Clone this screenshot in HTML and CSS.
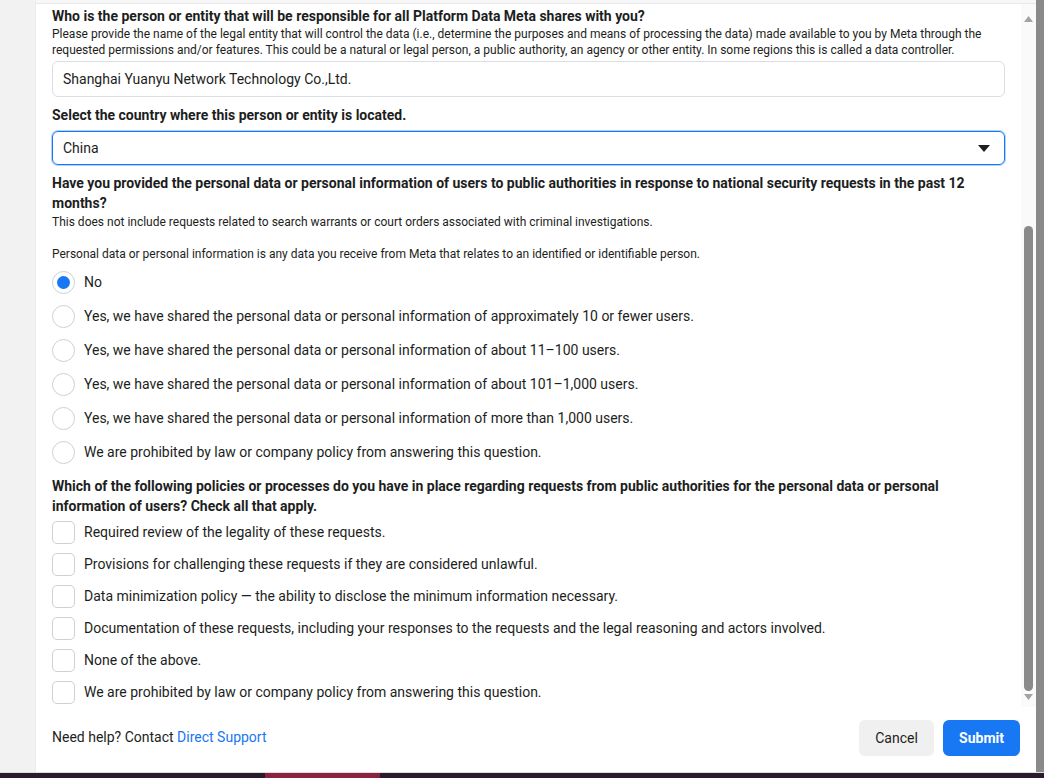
FILE: index.html
```html
<!DOCTYPE html>
<html lang="en">
<head>
<meta charset="utf-8">
<title>Data handling questions</title>
<link rel="stylesheet" href="styles.css">
</head>
<body>
<div class="page">
  <div class="main">
    <div class="gutter"></div>
    <div class="modal">
      <div class="modal-top"></div>
      <div class="modal-body">
        <div class="content">
          <div class="q-title">Who is the person or entity that will be responsible for all Platform Data Meta shares with you?</div>
          <div class="q-desc">Please provide the name of the legal entity that will control the data (i.e., determine the purposes and means of processing the data) made available to you by Meta through the requested permissions and/or features. This could be a natural or legal person, a public authority, an agency or other entity. In some regions this is called a data controller.</div>
          <div class="text-input">Shanghai Yuanyu Network Technology Co.,Ltd.</div>

          <div class="q-title q-select-label">Select the country where this person or entity is located.</div>
          <div class="select">
            <span>China</span>
            <svg class="caret" width="12" height="7" viewBox="0 0 12 7"><path d="M0 0h12L6 7z" fill="#1c1e21"/></svg>
          </div>

          <div class="q-title q-three">Have you provided the personal data or personal information of users to public authorities in response to national security requests in the past 12 months?</div>
          <div class="q-desc q-sub">This does not include requests related to search warrants or court orders associated with criminal investigations.</div>
          <div class="q-desc q-note">Personal data or personal information is any data you receive from Meta that relates to an identified or identifiable person.</div>

          <div class="options radios">
            <div class="opt"><span class="radio checked"></span><span>No</span></div>
            <div class="opt"><span class="radio"></span><span>Yes, we have shared the personal data or personal information of approximately 10 or fewer users.</span></div>
            <div class="opt"><span class="radio"></span><span>Yes, we have shared the personal data or personal information of about 11–100 users.</span></div>
            <div class="opt"><span class="radio"></span><span>Yes, we have shared the personal data or personal information of about 101–1,000 users.</span></div>
            <div class="opt"><span class="radio"></span><span>Yes, we have shared the personal data or personal information of more than 1,000 users.</span></div>
            <div class="opt"><span class="radio"></span><span>We are prohibited by law or company policy from answering this question.</span></div>
          </div>

          <div class="q-title q-four">Which of the following policies or processes do you have in place regarding requests from public authorities for the personal data or personal information of users? Check all that apply.</div>
          <div class="options checks">
            <div class="opt"><span class="check"></span><span>Required review of the legality of these requests.</span></div>
            <div class="opt"><span class="check"></span><span>Provisions for challenging these requests if they are considered unlawful.</span></div>
            <div class="opt"><span class="check"></span><span>Data minimization policy — the ability to disclose the minimum information necessary.</span></div>
            <div class="opt"><span class="check"></span><span>Documentation of these requests, including your responses to the requests and the legal reasoning and actors involved.</span></div>
            <div class="opt"><span class="check"></span><span>None of the above.</span></div>
            <div class="opt"><span class="check"></span><span>We are prohibited by law or company policy from answering this question.</span></div>
          </div>
        </div>
        <div class="scrollbar">
          <svg class="sb-arrow" width="9" height="6" viewBox="0 0 9 6"><path d="M0 6L4.5 0L9 6z" fill="#a3a3a3"/></svg>
          <div class="sb-space">
            <div class="sb-thumb"></div>
          </div>
          <svg class="sb-arrow" width="9" height="6" viewBox="0 0 9 6"><path d="M0 0h9L4.5 6z" fill="#a3a3a3"/></svg>
        </div>
      </div>
      <div class="modal-footer">
        <div class="help">Need help? Contact <a class="link" href="#">Direct Support</a></div>
        <div class="buttons">
          <button class="btn btn-cancel" type="button">Cancel</button>
          <button class="btn btn-submit" type="button">Submit</button>
        </div>
      </div>
    </div>
    <div class="edge"></div>
  </div>
  <div class="bottom-line"></div>
  <div class="bottom-strip"><span class="strip-red"></span></div>
</div>
</body>
</html>
```

FILE: styles.css
```css
* { box-sizing: border-box; }

html, body {
  margin: 0;
  padding: 0;
  height: 100%;
}

body {
  font-family: Roboto, "Liberation Sans", Arial, sans-serif;
  color: #1c1e21;
  background: #2a1b2c;
  overflow: hidden;
}

.page {
  width: 1044px;
  height: 778px;
  display: flex;
  flex-direction: column;
}

.main {
  display: flex;
  height: 772px;
}

.gutter {
  width: 36px;
  background: #f2f2f2;
  border-right: 1px solid #ebebeb;
}

.modal {
  width: 1000px;
  background: #fff;
  display: flex;
  flex-direction: column;
}

.modal-top {
  height: 4px;
  background: #f7f7f7;
  border-bottom: 1px solid #e8e8e8;
}

.modal-body {
  display: flex;
  height: 703px;
}

.content {
  flex: 1;
  padding: 2px 16px 0 16px;
}

.q-title {
  font-size: 14px;
  font-weight: 700;
  line-height: 20px;
  color: #1c1e21;
}

.q-desc {
  font-size: 12px;
  line-height: 16px;
  color: #1c1e21;
}

.text-input {
  margin-top: 3px;
  height: 36px;
  border: 1px solid #dadde1;
  border-radius: 6px;
  padding: 0 10px;
  display: flex;
  align-items: center;
  font-size: 14px;
  color: #1c1e21;
}

.q-select-label {
  margin-top: 8px;
}

.select {
  margin-top: 6px;
  height: 34px;
  border: 1px solid #1877f2;
  box-shadow: 0 0 0 1px rgba(24, 119, 242, 0.35);
  border-radius: 6px;
  padding: 0 14px 0 10px;
  display: flex;
  align-items: center;
  justify-content: space-between;
  font-size: 14px;
}

.caret {
  display: block;
}

.q-three {
  margin-top: 8px;
}

.q-sub {
  margin-top: 1px;
}

.q-note {
  margin-top: 16px;
}

.options {
  display: flex;
  flex-direction: column;
}

.radios {
  margin-top: 3px;
}

.radios .opt {
  height: 34px;
}

.checks .opt {
  height: 32px;
}

.opt {
  display: flex;
  align-items: center;
  gap: 9px;
  font-size: 14px;
  color: #1c1e21;
}

.radio {
  width: 23px;
  height: 23px;
  border: 1px solid #ced0d4;
  border-radius: 50%;
  flex: none;
  display: flex;
  align-items: center;
  justify-content: center;
}

.radio.checked::after {
  content: "";
  width: 13px;
  height: 13px;
  border-radius: 50%;
  background: #1877f2;
}

.check {
  width: 23px;
  height: 23px;
  border: 1px solid #ced0d4;
  border-radius: 5px;
  flex: none;
}

.q-four {
  margin-top: 7px;
}

.scrollbar {
  width: 15px;
  background: #fafafa;
  display: flex;
  flex-direction: column;
  align-items: center;
  padding: 12px 0 7px;
}

.sb-arrow {
  display: block;
  flex: none;
}

.sb-space {
  flex: 1;
  width: 100%;
  display: flex;
  justify-content: center;
  padding: 204px 0 3px;
}

.sb-thumb {
  width: 9px;
  height: 100%;
  background: #8a8a8a;
  border-radius: 5px;
}

.modal-footer {
  flex: 1;
  display: flex;
  align-items: center;
  justify-content: space-between;
  padding: 0 16px 4px 16px;
}

.help {
  font-size: 14px;
  color: #1c1e21;
  margin-bottom: 2px;
}

.link {
  color: #1877f2;
  text-decoration: none;
}

.buttons {
  display: flex;
  gap: 9px;
}

.btn {
  font-family: Roboto, "Liberation Sans", Arial, sans-serif;
  height: 36px;
  border: none;
  border-radius: 6px;
  font-size: 14px;
  padding: 0 15px;
  cursor: pointer;
}

.btn-cancel {
  background: #f0f0f0;
  color: #1c1e21;
  width: 75px;
}

.btn-submit {
  background: #1877f2;
  color: #fff;
  font-weight: 700;
  width: 77px;
}

.edge {
  width: 8px;
  background: #8a8a8a;
}

.bottom-line {
  height: 1px;
  background: #dcdcdc;
}

.bottom-strip {
  flex: 1;
  background: #2a1b2c;
  position: relative;
}

.strip-red {
  position: absolute;
  left: 265px;
  top: 0;
  width: 115px;
  height: 100%;
  background: #8a2340;
}
```
